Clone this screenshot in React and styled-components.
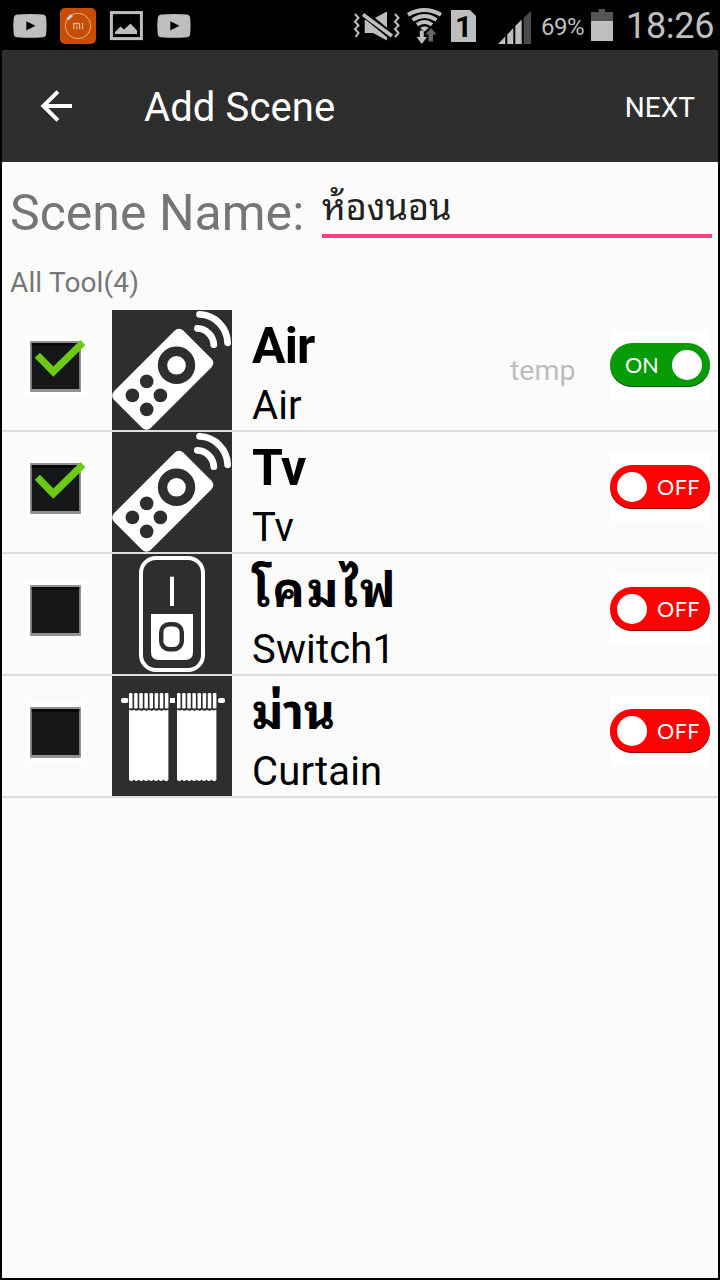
import React from "react";
import styled, { createGlobalStyle } from "styled-components";

const GlobalStyle = createGlobalStyle`
  * { box-sizing: border-box; }
  body {
    margin: 0;
    background: #000;
    font-family: Roboto, "Noto Sans Thai Looped", Loma, Waree, Garuda, "Noto Sans", sans-serif;
  }
  svg { display: block; flex: none; overflow: visible; }
`;

const Screen = styled.div`
  width: 720px;
  height: 1280px;
  padding: 0 2px 2px;
  background: #000;
  display: flex;
  flex-direction: column;
  overflow: hidden;
`;

const StatusBar = styled.div`
  flex: none;
  height: 50px;
  padding: 0 4px 0 10px;
  display: flex;
  justify-content: space-between;
  align-items: flex-start;
  color: #bebebe;
`;

const Notifications = styled.div`
  display: flex;
  gap: 12px;
  padding-top: 8px;
`;

const Indicators = styled.div`
  display: flex;
  height: 50px;
  align-items: flex-start;
`;

const Gap = styled.span`
  width: ${(p) => p.$size}px;
`;

const SimBadge = styled.div`
  width: 25px;
  height: 32px;
  margin: 10px 22px 0 9px;
  background: #bebebe;
  clip-path: polygon(0 0, 19px 0, 100% 6px, 100% 100%, 0 100%);
  color: #000;
  font: 700 30px/34px Roboto, sans-serif;
  text-align: center;
`;

const StatusText = styled.span`
  display: block;
  width: ${(p) => p.$width}px;
  font-size: ${(p) => p.$size}px;
  line-height: 50px;
  padding-top: ${(p) => p.$drop || 0}px;
  letter-spacing: ${(p) => p.$spacing || 0}px;
  white-space: nowrap;
`;

const AppBar = styled.header`
  flex: none;
  height: 112px;
  padding: 0 23px 0 38px;
  display: flex;
  align-items: center;
  background: #2e2e2e;
  color: #fff;
`;

const Title = styled.h1`
  flex: 1;
  margin: 0 0 0 71px;
  padding-top: 3px;
  font-size: 40px;
  font-weight: 400;
  line-height: 48px;
  letter-spacing: 0.1px;
`;

const NextButton = styled.button`
  border: 0;
  padding: 3px 0 0;
  background: none;
  color: #fff;
  font: 400 28px/34px Roboto, sans-serif;
`;

const Content = styled.main`
  flex: 1;
  background: #fbfbfb;
`;

const NameRow = styled.div`
  display: flex;
  height: 104px;
  padding: 0 6px 0 8px;
`;

const NameLabel = styled.label`
  width: 312px;
  padding-top: 21px;
  color: #767676;
  font-size: 50px;
  line-height: 60px;
  white-space: nowrap;
`;

const NameField = styled.div`
  flex: 1;
  height: 76px;
  padding-top: 21px;
  border-bottom: 4px solid #fb4080;
  color: #212121;
  font-size: 36px;
  line-height: 50px;
  white-space: nowrap;
`;

const ListHeading = styled.div`
  height: 44px;
  padding-left: 8px;
  color: #767676;
  font-size: 28px;
  line-height: 33px;
  letter-spacing: 0.15px;
`;

const ToolRow = styled.div`
  display: flex;
  height: 122px;
  padding-left: 24px;
  border-bottom: 2px solid #dedede;
`;

const CheckSlot = styled.div`
  width: 86px;
  padding-top: 26px;
`;

const ToolIcon = styled.div`
  width: 120px;
  height: 120px;
  background: #2e2e2e;
  overflow: hidden;
`;

const ToolText = styled.div`
  flex: 1;
  padding: 7px 0 0 20px;
  color: #000;
  white-space: nowrap;
`;

const ToolName = styled.div`
  height: 59px;
  font-size: ${(p) => p.$size || 50}px;
  font-weight: 700;
  line-height: 59px;
  letter-spacing: ${(p) => p.$spacing || 0}px;
`;

const ToolKind = styled.div`
  margin-top: 6px;
  font-size: 40px;
  line-height: 47px;
  letter-spacing: 0.15px;
`;

const TempHint = styled.div`
  width: 100px;
  padding-top: 43px;
  color: #bdbdbd;
  font-size: 28.5px;
  line-height: 36px;
`;

const ToggleSlot = styled.div`
  width: 100px;
  height: 70px;
  margin: 20px 8px 0 0;
  padding-top: 13px;
  background: #fff;
`;

const Toggle = styled.div`
  width: 100px;
  height: 44px;
  border-radius: 22px;
  padding: 0 ${(p) => (p.$on ? "8px 0 15px" : "10px 0 7px")};
  display: flex;
  align-items: center;
  justify-content: space-between;
  flex-direction: ${(p) => (p.$on ? "row" : "row-reverse")};
  background: ${(p) => (p.$on ? "#079c07" : "#fd0202")};
  box-shadow: inset 0 -1px 0 ${(p) => (p.$on ? "#045c04" : "#9c0000")};
  color: #fff;
  font: 400 21.5px/44px Lato, sans-serif;
  letter-spacing: ${(p) => (p.$on ? 0 : 0.5)}px;
`;

const Knob = styled.span`
  width: 30px;
  height: 30px;
  border-radius: 50%;
  background: #fff;
`;

function PlayIcon() {
  return (
    <svg width="36" height="36" viewBox="0 0 36 36">
      <path d="M5 6.5Q18 5.3 31 6.5Q34 7 34.2 10Q35 18 34.2 26Q34 29 31 29.3Q18 30.4 5 29.3Q2 29 1.7 26Q.8 18 1.7 10Q2 7 5 6.5Z" fill="#bebebe" />
      <path d="M14.3 13.2L23.5 17.8L14.3 22.4Z" fill="#000" />
    </svg>
  );
}

function MiIcon() {
  return (
    <svg width="36" height="36" viewBox="0 0 36 36" fill="none">
      <rect width="36" height="36" rx="5" fill="#c64d02" />
      <circle cx="18" cy="18" r="12.7" stroke="#e6b08a" strokeWidth="1" />
      <path d="M7.3 11.5L12 7" stroke="#d5c8bf" strokeWidth="3" />
      <path d="M13.7 21.2V15.5H18.2Q19.6 15.5 19.6 17V21.2M16.7 17.5V21.2M22.5 15V21.2" stroke="#d9b49b" strokeWidth="1.3" />
    </svg>
  );
}

function PictureIcon() {
  return (
    <svg width="36" height="36" viewBox="0 0 36 36">
      <rect x="3.4" y="4.6" width="30" height="26" fill="none" stroke="#bebebe" strokeWidth="3" />
      <path d="M7 26V24L12.5 18.5L16 21.5L22.5 15.5L29 22.5V26Z" fill="#bebebe" />
    </svg>
  );
}

function MuteIcon() {
  return (
    <svg width="46" height="50" viewBox="0 0 46 50">
      <g fill="none" stroke="#bebebe" strokeWidth="2">
        <path d="M1 14L4.5 18L1 21.5L4.5 25.5L1 29L4.5 33L1.5 37" />
        <path d="M41 14L44.5 18L41 21.5L44.5 25.5L41 29L44.5 33L41 37" />
      </g>
      <path d="M10.7 20H17L33 11.5V40.5L19 33H10.7Z" fill="#bebebe" />
      <path d="M10 13.7L38 36.5" stroke="#000" strokeWidth="7.4" />
      <path d="M9 14.5L38 36" stroke="#bebebe" strokeWidth="3.6" />
    </svg>
  );
}

function WifiIcon() {
  return (
    <svg width="35" height="50" viewBox="0 0 35 50" fill="none">
      <g stroke="#bebebe" strokeWidth="3.9">
        <path d="M1 14.8Q17.5 5.2 34 14.8" />
        <path d="M5.5 20Q17.5 12 29.5 20" />
        <path d="M10 24.8Q17.5 19.2 25 24.8" />
      </g>
      <path d="M13.2 28Q17.5 24.5 21.8 28L17.5 31.5Z" fill="#bebebe" />
      <path d="M12.8 30.5H16.8V37H20L14.8 44L9.6 37H12.8Z" fill="#bebebe" />
      <path d="M21.5 41.5H26V34.5H29.5L24 28L18.5 34.5H21.5Z" fill="#666" />
    </svg>
  );
}

function SignalIcon() {
  return (
    <svg width="33" height="50" viewBox="0 0 33 50">
      <path d="M0 44L7.3 36.4V44ZM9.3 44V34.6L15.3 28V44ZM17.3 44V26L23.7 19.5V44Z" fill="#bebebe" />
      <path d="M25.7 44V17.8L33 11V44Z" fill="#4a4a4a" />
    </svg>
  );
}

function BatteryIcon() {
  return (
    <svg width="22" height="50" viewBox="0 0 22 50">
      <path d="M7.7 9H14V12H22V21H0V12H7.7Z" fill="#555" />
      <rect y="21" width="22" height="20" fill="#bebebe" />
    </svg>
  );
}

function BackIcon() {
  return (
    <svg width="33" height="32" viewBox="0 0 33 32" fill="none" stroke="#fff" strokeWidth="4">
      <path d="M17.9 1.6L3.4 16L17.9 30.4M3.4 16H32" />
    </svg>
  );
}

function CheckBox({ checked }) {
  return (
    <svg width="60" height="60" viewBox="0 0 60 60">
      <rect width="60" height="60" rx="3" fill="#fff" />
      <rect x="4" y="5" width="51" height="51" rx="1" fill="#929292" />
      <rect x="5.8" y="7" width="47.4" height="46" fill="#161719" />
      <rect x="5.8" y="7" width="47.4" height="3" fill="#08090a" />
      {checked && (
        <path d="M11.3 19.3L27.3 35.6L56.9 6.6" fill="none" stroke="#6cc914" strokeWidth="7.2" />
      )}
    </svg>
  );
}

function RemoteIcon() {
  return (
    <svg width="120" height="120" viewBox="0 0 120 120">
      <rect x="1.75" y="43.25" width="98" height="52" rx="6" fill="#fff" transform="rotate(-45 50.75 69.25)" />
      <circle cx="64.5" cy="55.3" r="14" fill="none" stroke="#2e2e2e" strokeWidth="9.4" />
      <g fill="#2e2e2e">
        <circle cx="34.7" cy="71.4" r="6.8" />
        <circle cx="20.4" cy="85.4" r="6.8" />
        <circle cx="48.4" cy="85.4" r="6.8" />
        <circle cx="34.7" cy="99.4" r="6.8" />
      </g>
      <g fill="none" stroke="#fff" strokeWidth="6.8" strokeLinecap="round">
        <path d="M87.6 4.4A29 29 0 0 1 115.6 32.8" />
        <path d="M85.4 18.4A17 17 0 0 1 101.8 34.6" />
      </g>
    </svg>
  );
}

function RockerIcon() {
  return (
    <svg width="120" height="120" viewBox="0 0 120 120">
      <rect x="29" y="4" width="62" height="112" rx="15" fill="none" stroke="#fff" strokeWidth="4" />
      <rect x="58" y="22.7" width="4" height="29.3" fill="#fff" />
      <path d="M39 60H81V98Q81 106 73 106H47Q39 106 39 98Z" fill="#fff" />
      <rect x="49.2" y="70.2" width="20.6" height="25" rx="8" fill="none" stroke="#2e2e2e" strokeWidth="4.4" />
    </svg>
  );
}

function CurtainPanel({ x }) {
  const pleats = [0, 1, 2, 3, 4, 5, 6, 7];
  return (
    <g transform={`translate(${x} 0)`} fill="#fff">
      {pleats.map((i) => (
        <rect key={i} x={i * 5.13} y="17" width="3.5" height="15.5" rx="1.2" />
      ))}
      <path d="M0 33.5Q2.5 35.5 5 33.8Q7.5 35.5 10 33.8Q12.5 35.5 15 33.8Q17.5 35.5 20 33.8Q22.5 35.5 25 33.8Q27.5 35.5 30 33.8Q32.5 35.5 35 33.8Q37.5 35.5 39.4 33.5V104Q37 106.5 34.5 103.5Q32 106.5 29.5 103.5Q27 106.5 24.6 103.5Q22 106.5 19.7 103.5Q17 106.5 14.8 103.5Q12.5 106.5 9.8 103.5Q7.5 106.5 4.9 103.5Q2.5 106.5 0 104Z" />
    </g>
  );
}

function CurtainIcon() {
  return (
    <svg width="120" height="120" viewBox="0 0 120 120">
      <rect x="9" y="22" width="7.3" height="5" rx="2" fill="#fff" />
      <rect x="58" y="22" width="5" height="5" fill="#fff" />
      <rect x="106" y="22" width="7" height="5" rx="2" fill="#fff" />
      <CurtainPanel x={17} />
      <CurtainPanel x={65} />
    </svg>
  );
}

const tools = [
  { name: "Air", kind: "Air", Icon: RemoteIcon, checked: true, on: true, hint: "temp", spacing: -0.9 },
  { name: "Tv", kind: "Tv", Icon: RemoteIcon, checked: true, on: false },
  { name: "โคมไฟ", kind: "Switch1", Icon: RockerIcon, checked: false, on: false, size: 48, spacing: 2.1 },
  { name: "ม่าน", kind: "Curtain", Icon: CurtainIcon, checked: false, on: false, size: 48, spacing: -0.5 },
];

export default function App() {
  return (
    <Screen>
      <GlobalStyle />
      <StatusBar>
        <Notifications>
          <PlayIcon />
          <MiIcon />
          <PictureIcon />
          <PlayIcon />
        </Notifications>
        <Indicators>
          <MuteIcon />
          <Gap $size={7} />
          <WifiIcon />
          <SimBadge>1</SimBadge>
          <SignalIcon />
          <Gap $size={10} />
          <StatusText $size={24} $width={50} $drop={1.5} $spacing={-0.5}>69%</StatusText>
          <BatteryIcon />
          <Gap $size={13} />
          <StatusText $size={36} $width={88} $drop={1} $spacing={-0.3}>18:26</StatusText>
        </Indicators>
      </StatusBar>
      <AppBar>
        <BackIcon />
        <Title>Add Scene</Title>
        <NextButton>NEXT</NextButton>
      </AppBar>
      <Content>
        <NameRow>
          <NameLabel>Scene Name:</NameLabel>
          <NameField>ห้องนอน</NameField>
        </NameRow>
        <ListHeading>All Tool(4)</ListHeading>
        {tools.map(({ name, kind, Icon, checked, on, hint, size, spacing }) => (
          <ToolRow key={name}>
            <CheckSlot>
              <CheckBox checked={checked} />
            </CheckSlot>
            <ToolIcon>
              <Icon />
            </ToolIcon>
            <ToolText>
              <ToolName $size={size} $spacing={spacing}>{name}</ToolName>
              <ToolKind>{kind}</ToolKind>
            </ToolText>
            {hint && <TempHint>{hint}</TempHint>}
            <ToggleSlot>
              <Toggle $on={on}>
                {on ? "ON" : "OFF"}
                <Knob />
              </Toggle>
            </ToggleSlot>
          </ToolRow>
        ))}
      </Content>
    </Screen>
  );
}
